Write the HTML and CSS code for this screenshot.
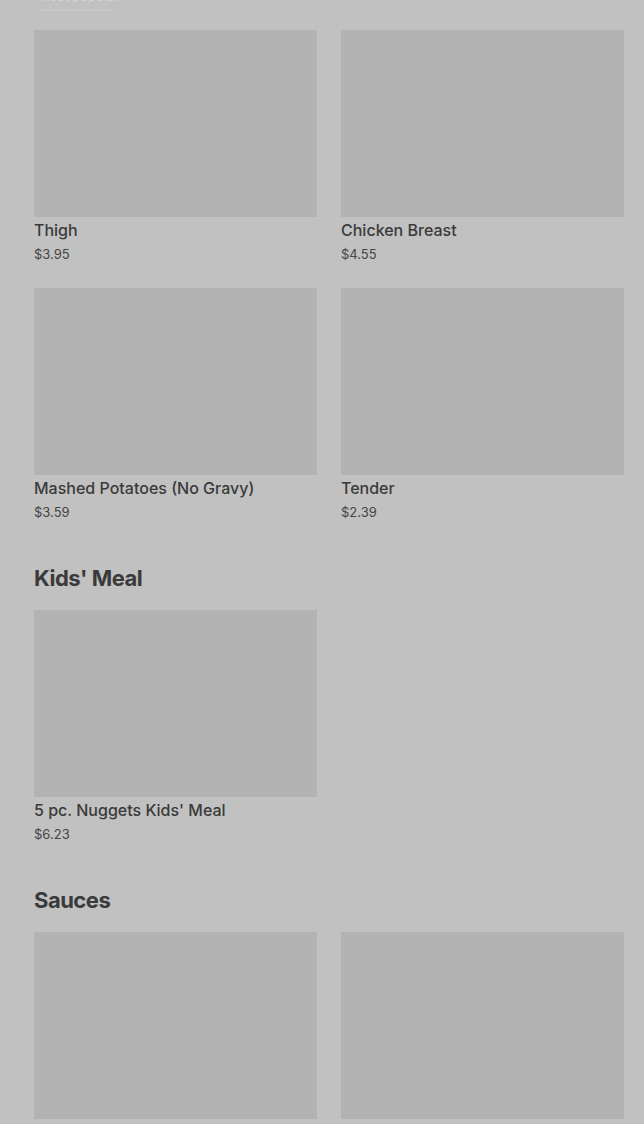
FILE: index.html
```html
<!DOCTYPE html>
<html>
<head>
<meta charset="utf-8">
<link rel="stylesheet" href="styles.css">
</head>
<body>
<div class="page">
  <div class="top">
    <div class="top-tab">Most popular</div>
  </div>

  <section class="section">
    <div class="grid">
      <div class="item"><div class="thumb"></div><div class="name">Thigh</div><div class="price">$3.95</div></div>
      <div class="item"><div class="thumb"></div><div class="name">Chicken Breast</div><div class="price">$4.55</div></div>
      <div class="item"><div class="thumb"></div><div class="name">Mashed Potatoes (No Gravy)</div><div class="price">$3.59</div></div>
      <div class="item"><div class="thumb"></div><div class="name">Tender</div><div class="price">$2.39</div></div>
    </div>
  </section>

  <section class="section">
    <h2 class="heading">Kids' Meal</h2>
    <div class="grid">
      <div class="item"><div class="thumb"></div><div class="name">5 pc. Nuggets Kids' Meal</div><div class="price">$6.23</div></div>
    </div>
  </section>

  <section class="section">
    <h2 class="heading">Sauces</h2>
    <div class="grid">
      <div class="item"><div class="thumb"></div></div>
      <div class="item"><div class="thumb"></div></div>
    </div>
  </section>
</div>
</body>
</html>
```

FILE: styles.css
```css
html, body {
  margin: 0;
  padding: 0;
  background: #c1c1c1;
}
body {
  font-family: Inter, "Noto Sans", sans-serif;
  color: #3a3a3a;
  overflow: hidden;
  height: 1124px;
}
.page {
  padding: 0 20px 0 34px;
}
.top {
  height: 30px;
  overflow: hidden;
}
.top-tab {
  width: 74px;
  margin: -12px 0 0 4px;
  padding-bottom: 6px;
  font-size: 13px;
  line-height: 16px;
  color: #d4d4d4;
  white-space: nowrap;
  border-bottom: 1px solid #c9c9c9;
}
.section + .section {
  margin-top: 40px;
}
.heading {
  margin: 0 0 16px;
  font-size: 22px;
  line-height: 32px;
  font-weight: 700;
  letter-spacing: -0.5px;
  color: #3a3a3a;
}
.grid {
  display: grid;
  grid-template-columns: 283px 283px;
  column-gap: 24px;
  row-gap: 24px;
}
.thumb {
  height: 187px;
  background: #b3b3b3;
}
.name {
  margin-top: 1px;
  font-size: 16px;
  line-height: 24px;
  font-weight: 500;
  color: #3a3a3a;
}
.price {
  margin-top: 2px;
  font-size: 13px;
  line-height: 20px;
  color: #454545;
}
```
